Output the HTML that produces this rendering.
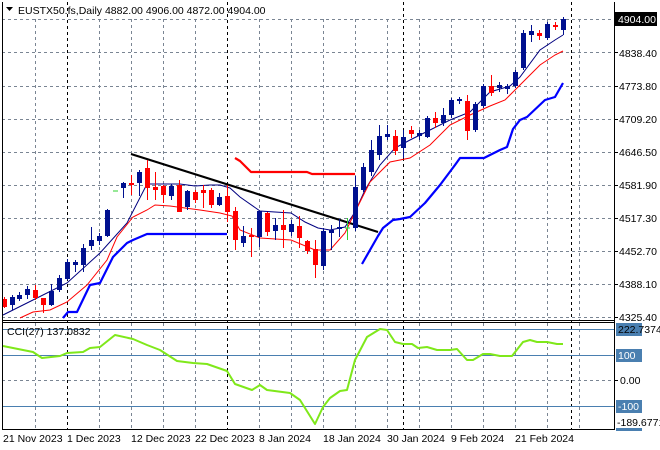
<!DOCTYPE html>
<html><head><meta charset="utf-8"><style>
html,body{margin:0;padding:0;background:#fff;}
svg{display:block;}
text{font-family:"Liberation Sans",sans-serif;font-size:10.5px;fill:#000;}
</style></head><body>
<svg width="660" height="450" viewBox="0 0 660 450" xmlns="http://www.w3.org/2000/svg">
<rect width="660" height="450" fill="#fff"/>
<g stroke="#7a8593" stroke-width="1" stroke-dasharray="3,3" fill="none">
<path d="M2 19.5H614M2 52.5H614M2 86.5H614M2 119.5H614M2 152.5H614M2 185.5H614M2 218.5H614M2 251.5H614M2 284.5H614M2 317.5H614"/>
<path d="M35.5 19V320M99.5 19V320M131.5 19V320M163.5 19V320M195.5 19V320M259.5 19V320M291.5 19V320M323.5 19V320M355.5 19V320M387.5 19V320M419.5 19V320M451.5 19V320M483.5 19V320M515.5 19V320M547.5 19V320M579.5 19V320"/>
<path d="M35.5 323V429M99.5 323V429M131.5 323V429M163.5 323V429M195.5 323V429M259.5 323V429M291.5 323V429M323.5 323V429M355.5 323V429M387.5 323V429M419.5 323V429M451.5 323V429M483.5 323V429M515.5 323V429M547.5 323V429M579.5 323V429"/>
<path d="M2 380.5H614"/>
</g>
<g stroke="#000" stroke-width="1" stroke-dasharray="3,3" fill="none">
<path d="M67.5 2V429M227.5 2V429M403.5 2V429M571.5 2V429"/>
</g>
<g stroke="#4a7fb0" stroke-width="1">
<path d="M2 329.5H614M2 355.5H614M2 406.5H614"/>
</g>
<g fill="none" stroke-width="2.2" stroke-linejoin="round">
<polyline stroke="#0000ff" points="63,318 68,312 77,312 90,285 100,283 113,257 127,243 133,240 147,234 227,234"/>
<polyline stroke="#0000ff" points="362,264 378,236 383,228 393,220 400,219 410,217 425,203 430,197 440,185 455,165 460,158 484,158 500,150 507,147 513,129 520,120 527,117 545,100 555,97 563,83"/>
<polyline stroke="#ff0000" points="235,158 240,161 244,165 251,172 307,172 312,174 355,174"/>
<polyline stroke="#000" points="131,154 378,232"/>
</g>
<g fill="none" stroke-width="1">
<polyline stroke="#000080" points="3,315 33,300 67,283 100,253 127,223 147,184 163,184 180,184 195,186 210,185 220,185 230,188 240,197 260,211 275,212 291,213 305,222 318,228 330,230 345,227 355,212 365,190 380,165 395,148 410,140 430,130 450,120 470,112 490,92 510,86 520,77 540,50 555,40 563,35"/>
<polyline stroke="#ff0000" points="20,318 33,312 50,310 67,302 87,285 107,260 117,237 133,217 147,210 155,205 170,206 200,210 220,213 232,216 240,230 260,238 291,240 315,250 330,250 345,233 355,212 370,182 390,162 410,158 430,145 450,125 470,115 490,106 505,100 515,90 525,80 540,65 555,55 563,51"/>
</g>
<g stroke-width="1">
<path stroke="#ff0000" d="M4.5 297V308M35.5 285V300M43.5 298V313M131.5 175V195M147.5 160V200M155.5 172V200M163.5 185V203M179.5 180V212M195.5 190V203M203.5 185V208M211.5 188V208M227.5 185V222M235.5 207V250M251.5 228V257M267.5 212V236M283.5 210V248M299.5 216V248M307.5 240V254M315.5 240V278M395.5 130V155M411.5 126V138M435.5 112V128M467.5 95V140M491.5 75V96M539.5 30V40M555.5 22V30"/>
<path stroke="#00108f" d="M12.5 295V310M19.5 292V301M27.5 286V299M51.5 284V306M59.5 275V292M67.5 259V280M75.5 260V272M83.5 244V272M91.5 227V250M99.5 233V245M107.5 209V237M123.5 182V198M139.5 170V196M171.5 184V200M187.5 190V210M219.5 193V206M243.5 226V247M259.5 211V247M275.5 218V240M291.5 220V236M323.5 228V270M331.5 225V250M339.5 219V237M355.5 176V231M363.5 163V192M371.5 140V176M379.5 125V160M387.5 125V140M403.5 130V158M419.5 130V140M427.5 116V138M443.5 108V126M451.5 98V118M459.5 97V104M475.5 102V132M483.5 84V108M499.5 82V92M507.5 84V94M515.5 70V88M523.5 30V70M531.5 25V42M547.5 22V40M563.5 17V35"/>
<path stroke="#2fd02f" d="M113 191H118M347.5 218V240M345 228H350"/>
</g>
<g fill="#ff0000">
<rect x="2" y="299" width="5" height="8"/><rect x="33" y="290" width="5" height="8"/><rect x="41" y="298" width="5" height="7"/>
<rect x="129" y="183" width="5" height="2"/><rect x="145" y="168" width="5" height="20"/><rect x="153" y="187" width="5" height="3"/><rect x="161" y="186" width="5" height="9"/>
<rect x="177" y="185" width="5" height="27"/><rect x="193" y="192" width="5" height="8"/><rect x="201" y="190" width="5" height="3"/><rect x="209" y="190" width="5" height="15"/>
<rect x="225" y="196" width="5" height="16"/><rect x="233" y="211" width="5" height="29"/><rect x="249" y="235" width="5" height="2"/><rect x="265" y="213" width="5" height="19"/>
<rect x="281" y="225" width="5" height="5"/><rect x="297" y="226" width="5" height="12"/><rect x="305" y="241" width="5" height="10"/><rect x="313" y="249" width="5" height="16"/>
<rect x="393" y="136" width="5" height="15"/><rect x="409" y="130" width="5" height="4"/><rect x="433" y="118" width="5" height="5"/><rect x="465" y="101" width="5" height="30"/>
<rect x="489" y="86" width="5" height="7"/><rect x="537" y="33" width="5" height="3"/><rect x="553" y="25" width="5" height="2"/>
</g>
<g fill="#00108f">
<rect x="10" y="297" width="5" height="8"/><rect x="17" y="295" width="5" height="4"/><rect x="25" y="289" width="5" height="6"/><rect x="49" y="291" width="5" height="14"/>
<rect x="57" y="278" width="5" height="12"/><rect x="65" y="262" width="5" height="17"/><rect x="73" y="262" width="5" height="3"/><rect x="81" y="248" width="5" height="17"/>
<rect x="89" y="240" width="5" height="6"/><rect x="97" y="236" width="5" height="5"/><rect x="105" y="210" width="5" height="26"/><rect x="121" y="183" width="5" height="5"/>
<rect x="137" y="172" width="5" height="11"/><rect x="169" y="186" width="5" height="10"/><rect x="185" y="191" width="5" height="16"/><rect x="217" y="197" width="5" height="8"/>
<rect x="241" y="236" width="5" height="7"/><rect x="257" y="211" width="5" height="26"/><rect x="273" y="225" width="5" height="6"/><rect x="289" y="224" width="5" height="8"/>
<rect x="321" y="231" width="5" height="35"/><rect x="329" y="230" width="5" height="3"/><rect x="337" y="227" width="5" height="2"/><rect x="353" y="187" width="5" height="41"/>
<rect x="361" y="167" width="5" height="23"/><rect x="369" y="150" width="5" height="22"/><rect x="377" y="136" width="5" height="19"/><rect x="385" y="134" width="5" height="3"/>
<rect x="401" y="137" width="5" height="11"/><rect x="417" y="133" width="5" height="3"/><rect x="425" y="118" width="5" height="19"/><rect x="441" y="115" width="5" height="8"/>
<rect x="449" y="100" width="5" height="15"/><rect x="457" y="99" width="5" height="2"/><rect x="473" y="104" width="5" height="26"/><rect x="481" y="86" width="5" height="20"/>
<rect x="497" y="85" width="5" height="3"/><rect x="505" y="86" width="5" height="3"/><rect x="513" y="72" width="5" height="14"/><rect x="521" y="33" width="5" height="35"/>
<rect x="529" y="31" width="5" height="4"/><rect x="545" y="24" width="5" height="14"/><rect x="561" y="19" width="5" height="11"/>
</g>
<polyline fill="none" stroke="#7fe81a" stroke-width="2" stroke-linejoin="round" points="3,346 33,352 42,358 60,356 67,353 83,352 90,348 100,347 115,335 133,339 147,345 160,350 177,361 193,363 207,364 227,371 235,384 252,390 260,385 267,390 290,393 300,400 315,424 323,407 330,398 340,391 347,390 355,360 367,337 380,329 387,330 395,342 403,344 412,344 418,348 427,347 437,350 450,350 457,349 467,360 473,360 483,354 490,354 500,356 512,356 523,342 530,340 537,342 547,342 557,344 563,344"/>
<g stroke="#000" stroke-width="1" fill="none">
<path d="M2.5 2V429.5H614.5V2"/>
<path d="M2 320.5H614M2 322.5H614"/>
</g>
<g stroke="#000"><path d="M614 19.5H618M614 52.5H618M614 86.5H618M614 119.5H618M614 152.5H618M614 185.5H618M614 218.5H618M614 251.5H618M614 284.5H618M614 317.5H618M614 380.5H618"/></g>
<path d="M6 7H13L9.5 11Z" fill="#000"/>
<text x="18" y="14">EUSTX50.fs,Daily  4882.00 4906.00 4872.00 4904.00</text>
<rect x="615" y="12" width="42" height="14" fill="#000"/>
<text x="618" y="23" style="fill:#fff">4904.00</text>
<text x="619" y="57">4838.40</text>
<text x="619" y="90">4773.80</text>
<text x="619" y="123">4709.20</text>
<text x="619" y="156">4646.50</text>
<text x="619" y="189">4581.90</text>
<text x="619" y="222">4517.30</text>
<text x="619" y="255">4452.70</text>
<text x="619" y="288">4388.10</text>
<text x="619" y="321">4325.40</text>
<rect x="616" y="323" width="26" height="13" fill="#4a7fb0"/>
<text x="618" y="333">222.7374</text>
<rect x="616" y="349" width="26" height="13" fill="#4a7fb0"/>
<text x="618" y="359" style="fill:#fff">100</text>
<text x="620" y="384">0.00</text>
<rect x="616" y="400" width="26" height="13" fill="#4a7fb0"/>
<text x="618" y="410" style="fill:#fff">-100</text>
<text x="617" y="426">-189.6771</text>
<rect x="616" y="428" width="26" height="3" fill="#4a7fb0"/>
<text x="7" y="335">CCI(27) 137.0832</text>
<text x="3" y="442">21 Nov 2023</text>
<text x="67" y="442">1 Dec 2023</text>
<text x="131" y="442">12 Dec 2023</text>
<text x="195" y="442">22 Dec 2023</text>
<text x="259" y="442">8 Jan 2024</text>
<text x="323" y="442">18 Jan 2024</text>
<text x="387" y="442">30 Jan 2024</text>
<text x="451" y="442">9 Feb 2024</text>
<text x="515" y="442">21 Feb 2024</text>
</svg>
</body></html>
